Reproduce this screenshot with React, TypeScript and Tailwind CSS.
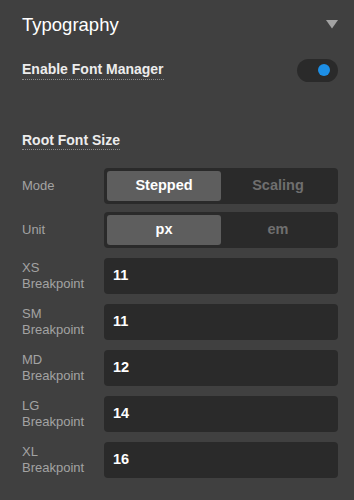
import React from "react";

const font = { fontFamily: "'Liberation Sans', Arial, sans-serif" };

function Segmented({ options, active }: { options: string[]; active: number }) {
  return (
    <div className="flex h-9 flex-1 rounded-[4px] bg-[#2a2a2a] p-[3px]">
      {options.map((o, i) => (
        <div
          key={o}
          className={
            i === active
              ? "flex flex-1 items-center justify-center rounded-[3px] bg-[#5e5e5e] text-[14.5px] font-bold text-white"
              : "flex flex-1 items-center justify-center text-[14.5px] font-bold text-[#6f6f6f]"
          }
        >
          {o}
        </div>
      ))}
    </div>
  );
}

function BreakpointRow({ size, value }: { size: string; value: string }) {
  return (
    <div className="flex items-center">
      <div className="w-[82px] text-[13px] leading-[16px] text-[#a3a3a3]">
        <div>{size}</div>
        <div>Breakpoint</div>
      </div>
      <div className="flex h-9 flex-1 items-center rounded-[4px] bg-[#2a2a2a] pl-[9px] text-[14.5px] font-bold text-white">
        {value}
      </div>
    </div>
  );
}

export default function App() {
  return (
    <div className="h-[500px] w-[354px] bg-[#404040] px-[22px] pr-[16px]" style={font}>
      <div className="flex items-center justify-between pt-[11px]">
        <div className="text-[18.5px] font-medium text-white">Typography</div>
        <svg width="12" height="9" viewBox="0 0 12 9">
          <polygon points="0,0 12,0 6,8.5" fill="#a3a3a3" />
        </svg>
      </div>
      <div className="mt-[20px] flex items-center justify-between">
        <div className="border-b border-dotted border-[#8a8a8a] pb-[1px] text-[14px] font-bold leading-[17px] text-[#ececec]">
          Enable Font Manager
        </div>
        <div className="flex h-[23px] w-[41px] items-center justify-end rounded-full bg-[#2a2a2a] pr-[8px]">
          <div className="h-3 w-3 rounded-full bg-[#1d8fe6]" />
        </div>
      </div>
      <div className="mt-[46px]">
        <span className="border-b border-dotted border-[#8a8a8a] pb-[1px] text-[14px] font-bold leading-[17px] text-[#ececec]">
          Root Font Size
        </span>
      </div>
      <div className="mt-[16px] flex flex-col gap-[8px]">
        <div className="flex items-center">
          <div className="w-[82px] text-[13px] text-[#a3a3a3]">Mode</div>
          <Segmented options={["Stepped", "Scaling"]} active={0} />
        </div>
        <div className="flex items-center">
          <div className="w-[82px] text-[13px] text-[#a3a3a3]">Unit</div>
          <Segmented options={["px", "em"]} active={0} />
        </div>
      </div>
      <div className="mt-[10px] flex flex-col gap-[10px]">
        <BreakpointRow size="XS" value="11" />
        <BreakpointRow size="SM" value="11" />
        <BreakpointRow size="MD" value="12" />
        <BreakpointRow size="LG" value="14" />
        <BreakpointRow size="XL" value="16" />
      </div>
    </div>
  );
}
